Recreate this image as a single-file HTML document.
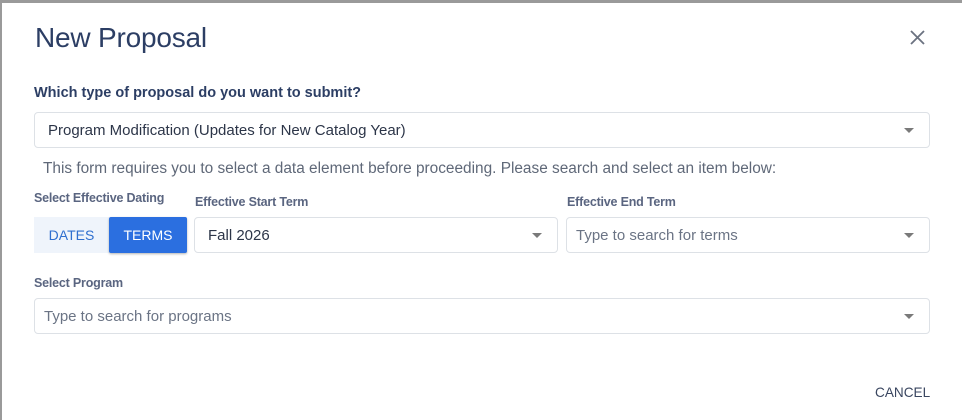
<!DOCTYPE html>
<html><head><style>
*{box-sizing:border-box;margin:0;padding:0}
body{width:962px;height:420px;background:#fff;font-family:"Liberation Sans",sans-serif;position:relative;overflow:hidden}
.frame{position:absolute;left:0;top:0;width:962px;height:420px;border-top:3px solid #9a9a9a;border-left:2px solid #9a9a9a;pointer-events:none}
.a{position:absolute}
.title{left:35px;top:22px;font-size:28px;color:#2c3e64;letter-spacing:-0.2px}
.q{left:34px;top:85px;font-size:14.5px;font-weight:bold;color:#2c3e64}
.box{position:absolute;border:1px solid #dde1e6;border-radius:4px;background:#fff;font-size:15px;color:#2c3548;padding-left:13px;display:flex;align-items:center}
.box.ph{color:#6b7485;padding-left:9px}
.caret{position:absolute;right:15px;top:50%;margin-top:-2px;width:0;height:0;border-left:5px solid transparent;border-right:5px solid transparent;border-top:5px solid #7a7a7a}
.lbl{font-size:12.5px;color:#5a6580;font-weight:bold;letter-spacing:-0.2px}
.help{left:43px;top:160px;font-size:15.4px;color:#5f6878}
</style></head><body>
<div class="frame"></div>
<div class="a title">New Proposal</div>
<svg class="a" style="left:910px;top:30px" width="15" height="15" viewBox="0 0 15 15"><path d="M1 1L14 14M14 1L1 14" stroke="#6b7280" stroke-width="1.8"/></svg>
<div class="a q">Which type of proposal do you want to submit?</div>
<div class="box" style="left:34px;top:112px;width:896px;height:36px">Program Modification (Updates for New Catalog Year)<span class="caret"></span></div>
<div class="a help">This form requires you to select a data element before proceeding. Please search and select an item below:</div>
<div class="a lbl" style="left:34px;top:191px">Select Effective Dating</div>
<div class="a lbl" style="left:195px;top:195px">Effective Start Term</div>
<div class="a lbl" style="left:567px;top:195px">Effective End Term</div>
<div class="a" style="left:34px;top:217px;width:75px;height:36px;background:#eff4fb;color:#2f6fcf;font-size:14px;display:flex;align-items:center;justify-content:center">DATES</div>
<div class="a" style="left:109px;top:217px;width:78px;height:36px;background:#2b6fe0;color:#fff;font-size:14px;display:flex;align-items:center;justify-content:center;border-radius:2px;box-shadow:0 1px 2px rgba(0,0,0,.3)">TERMS</div>
<div class="box" style="left:194px;top:217px;width:364px;height:36px">Fall 2026<span class="caret"></span></div>
<div class="box ph" style="left:566px;top:217px;width:364px;height:36px">Type to search for terms<span class="caret"></span></div>
<div class="a lbl" style="left:34px;top:276px">Select Program</div>
<div class="box ph" style="left:34px;top:298px;width:896px;height:36px">Type to search for programs<span class="caret"></span></div>
<div class="a" style="left:875px;top:385px;font-size:13.6px;color:#3a4660">CANCEL</div>
</body></html>
